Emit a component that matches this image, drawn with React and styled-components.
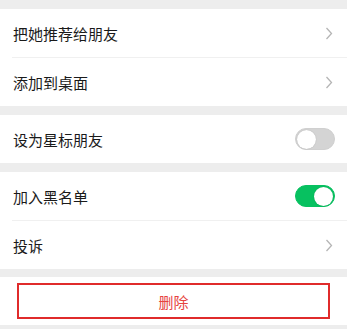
import React, { useState } from 'react';
import styled, { createGlobalStyle } from 'styled-components'

const GlobalStyle = createGlobalStyle`
  html, body {
    margin: 0;
    padding: 0;
    background: #ededed;
    font-family: "Noto Sans CJK SC", "Noto Sans", sans-serif;
  }
`

function Chevron() {
  return (
    <svg width="8" height="13" viewBox="0 0 8 13">
      <polyline points="1.5,1 6.5,6.5 1.5,12" fill="none" stroke="#b5b5b5" strokeWidth="1.3" />
    </svg>
  );
}

function Switch(props) {
  return (
    <Track on={ props.on } onClick={ props.onToggle }>
      <Knob on={ props.on } />
    </Track>
  );
}

function App() {
  const [star, setStar] = useState(false);
  const [black, setBlack] = useState(true);

  return (
    <Page>
      <GlobalStyle />
      <Group>
        <Row>
          <Label>把她推荐给朋友</Label>
          <Chevron />
        </Row>
        <Row divided>
          <Label>添加到桌面</Label>
          <Chevron />
        </Row>
      </Group>
      <Group>
        <Row>
          <Label>设为星标朋友</Label>
          <Switch on={ star } onToggle={ () => setStar(!star) } />
        </Row>
      </Group>
      <Group>
        <Row>
          <Label>加入黑名单</Label>
          <Switch on={ black } onToggle={ () => setBlack(!black) } />
        </Row>
        <Row divided>
          <Label>投诉</Label>
          <Chevron />
        </Row>
      </Group>
      <Group last>
        <DeleteBox>
          <DeleteButton>删除</DeleteButton>
        </DeleteBox>
      </Group>
    </Page>
  );
}

const Page = styled.div`
  display: flex;
  flex-direction: column;
  gap: 9px;
  padding-top: 9px;
  width: 347px;
  min-height: 329px;
  background: #ededed;
`

const Group = styled.div`
  background: #fff;
  display: flex;
  flex-direction: column;
  ${ props => props.last && `
      margin-top: -1px;
    `
  }
`

const Row = styled.div`
  height: 48px;
  display: flex;
  align-items: center;
  justify-content: space-between;
  padding: 0 14px 0 13px;
  position: relative;

  ${ props => props.divided && `
      border-top: 1px solid #f0f0f0;
      margin-left: 12px;
      padding-left: 1px;
    `
  }
`

const Label = styled.span`
  font-size: 15px;
  color: #1a1a1a;
  line-height: 1;
`

const Track = styled.div`
  width: 40px;
  height: 22px;
  border-radius: 11px;
  box-sizing: border-box;
  background: ${ props => props.on ? '#07c160' : '#d4d4d4' };
  border: 1px solid ${ props => props.on ? '#07c160' : '#d0d0d0' };
  display: flex;
  align-items: center;
  justify-content: ${ props => props.on ? 'flex-end' : 'flex-start' };
  padding: 0 1px;
  margin-right: -2px;
  cursor: pointer;
`

const Knob = styled.div`
  width: 19px;
  height: 19px;
  border-radius: 50%;
  background: #fff;
  box-shadow: 0 0 1px rgba(0, 0, 0, 0.25);
`

const DeleteBox = styled.div`
  height: 48px;
  box-sizing: border-box;
  padding: 6px 17px;
  display: flex;
`

const DeleteButton = styled.button`
  flex: 1;
  border: 2px solid #e02b2b;
  background: #fff;
  color: #e64340;
  font-family: "Noto Sans CJK SC", "Noto Sans", sans-serif;
  font-size: 15px;
  padding: 0;
  margin: 0;
  cursor: pointer;
  outline: none;
`

export default App;
